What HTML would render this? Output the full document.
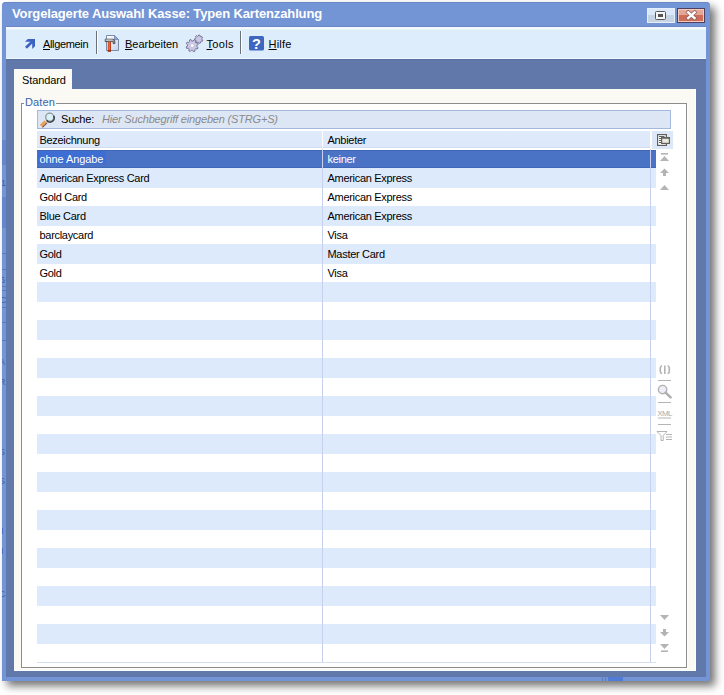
<!DOCTYPE html>
<html><head><meta charset="utf-8">
<style>
*{box-sizing:border-box}
html,body{margin:0;padding:0}
body{width:724px;height:695px;overflow:hidden;background:#fff;position:relative;font-family:"Liberation Sans",sans-serif;font-size:11px;color:#000}
.a{position:absolute}
.t{position:absolute;white-space:nowrap;line-height:16px;height:16px}
#win{left:2px;top:2px;width:708px;height:679px;background:#7395d5;border-radius:4px 4px 0 0;box-shadow:5px 5px 8px rgba(0,0,0,.55),inset 0 1px 0 #6a88c6}
#tline{left:6px;top:26px;width:700px;height:1px;background:#6b87c2}
#title{left:12px;top:6px;font-weight:bold;font-size:13px;color:#fff;letter-spacing:-0.13px}
#tb{left:6px;top:27px;width:700px;height:32px;background:linear-gradient(#f2faff 0,#f2faff 2px,#deedfc 3px,#deedfc 31px,#eef6fe 31px)}
#slate{left:6px;top:59px;width:700px;height:618px;background:linear-gradient(#566f9e 0,#6079aa 2px)}
#panel{left:14px;top:89px;width:682px;height:582px;background:#faf9f4;border-right:1px solid #fff;border-bottom:1px solid #fff}
#tab{left:14px;top:69px;width:58px;height:21px;background:#faf9f4}
.tbt{letter-spacing:-0.22px}
.sep{position:absolute;width:2px;border-left:1px solid #6c7079;border-right:1px solid #fff}
#gb{left:21px;top:103px;width:666px;height:565px;border:1px solid #8c8c8c}
#gbw{left:22px;top:104px;width:664px;height:563px;background:#fff}
#daten{left:25px;top:94px;color:#3765ad;font-size:11px;letter-spacing:0.1px}
#search{left:37px;top:110px;width:634px;height:19px;background:#dde6f5;border:1px solid #a3badd}
.row{position:absolute;left:37px;width:619px;height:18px}
.blue{height:20px}
.blue{background:#ddeafc}
.sel{background:#4a73c5;color:#fff;box-shadow:inset 0 1px 0 #4066b6,inset 0 -1px 0 #4066b6}
.c1,.c2{position:absolute;top:0;line-height:19px;height:19px;white-space:nowrap;letter-spacing:-0.3px;transform:scaleY(1.05);transform-origin:0 13px}
.c1{left:2.5px}
.c2{left:290.5px}
#hdr{left:37px;top:131px;width:613px;height:17px;background:linear-gradient(#dfeafb 0,#dde9fa 16px,#d2dcec 16px)}
#hsep{left:322px;top:131px;width:1px;height:17px;background:#fff}
#vline{left:322px;top:149px;width:1px;height:514px;background:#c7d1ef}
#vline2{left:650px;top:149px;width:1px;height:514px;background:#c7d1ef}
#hline{left:37px;top:662px;width:619px;height:1px;background:#d3dff2}
</style></head><body>
<div id="win" class="a"></div>
<div id="title" class="t">Vorgelagerte Auswahl Kasse: Typen Kartenzahlung</div>

<div class="a" style="left:647px;top:8px;width:28px;height:15px;background:linear-gradient(#dbe8f9 0,#dbe8f9 50%,#c6d3e2 50%,#c6d3e2 100%);border:1px solid #e6eefa"></div>
<div class="a" style="left:655px;top:11px;width:11px;height:9px;border:1.5px solid #555;border-radius:1.5px;background:#f4f6f8"></div>
<div class="a" style="left:658px;top:14px;width:5px;height:3px;background:#555"></div>
<div class="a" style="left:677px;top:8px;width:28px;height:15px;border:1px solid #4f4060;background:#d0705a"></div>
<div class="a" style="left:678px;top:9px;width:26px;height:13px;border:1px solid #f3cbbd;background:linear-gradient(#e5a898 0,#e3a594 45%,#cf6c57 45%,#cf6c57 100%)"></div>
<svg class="a" style="left:677px;top:8px" width="28" height="15" viewBox="677 8 28 15"><path d="M688.2 12.4 L694.6 18.1 M694.6 12.4 L688.2 18.1" stroke="#8c5a55" stroke-width="3.9" stroke-linecap="square"/><path d="M688.2 12.4 L694.6 18.1 M694.6 12.4 L688.2 18.1" stroke="#fff" stroke-width="2.5" stroke-linecap="square"/></svg>
<div id="tline" class="a"></div><div id="tb" class="a"></div><div class="a" style="left:608px;top:677px;width:15px;height:4px;background:#507bd6"></div><div class="a" style="left:602px;top:677px;width:1px;height:4px;background:#5d7cc0"></div><div class="a" style="left:605px;top:677px;width:1px;height:4px;background:#5d7cc0"></div>
<svg class="a" style="left:2px;top:60px" width="4" height="621" viewBox="2 60 4 621">
<rect x="2" y="140" width="4" height="25" fill="#6586cf"/>
<rect x="2" y="197" width="4" height="31" fill="#6586cf"/>
<g fill="#5a78bd">
<rect x="2" y="253" width="4" height="1"/><rect x="2" y="269" width="4" height="1"/><rect x="2" y="286" width="4" height="1"/><rect x="2" y="290" width="4" height="1"/><rect x="2" y="307" width="4" height="1"/><rect x="2" y="322" width="4" height="1"/><rect x="2" y="340" width="4" height="1"/>
</g>
<g fill="#3f5ea8" font-family="Liberation Sans" font-size="9">
<text x="1" y="186">1:</text>
<text x="0" y="283">6</text>
<text x="0" y="303">C</text>
<text x="-1" y="365">A</text>
<text x="-1" y="385">R</text>
<text x="-1" y="455">S</text>
<text x="-1" y="484">S</text>
<text x="1" y="534">I</text>
<text x="1" y="554">I</text>
<text x="-1" y="597">C</text>
</g>
</svg>

<div id="slate" class="a"></div>
<div id="tab" class="a"></div>
<div id="panel" class="a"></div>
<div class="t" style="left:22px;top:72px;letter-spacing:-0.1px">Standard</div>


<svg class="a" style="left:0;top:0" width="724" height="100" viewBox="0 0 724 100">
<path d="M25 41.8 L27.8 39 L35 39 L35 46.2 L32.2 49 L32.2 43.6 L27 48.8 L25 46.8 L30.3 41.8 Z" fill="#3d62c2"/>
<defs><linearGradient id="dg" x1="0" y1="0" x2="1" y2="1"><stop offset="0" stop-color="#ffffff"/><stop offset="1" stop-color="#c4d4ee"/></linearGradient>
<linearGradient id="hg" x1="0" y1="0" x2="1" y2="0"><stop offset="0" stop-color="#b83010"/><stop offset=".45" stop-color="#f07848"/><stop offset="1" stop-color="#a82808"/></linearGradient></defs>
<path d="M106.5 35.5 H114.5 L118.5 39.5 V50.5 H106.5 Z" fill="url(#dg)" stroke="#7d8ca6" stroke-width="1"/>
<path d="M114.5 35.5 V39.5 H118.5 Z" fill="#8fa8d8" stroke="#6f86b8" stroke-width="0.8"/>
<path d="M105.2 39.2 H113 Q114.8 39.2 114.8 41.2 V43.6 H113.2 V41.6 H105.2 Z" fill="#9c9c9c" stroke="#3c3c3c" stroke-width="0.8"/>
<rect x="105.6" y="39.6" width="7" height="0.9" fill="#e0e0e0"/>
<rect x="107.8" y="41.8" width="3.2" height="9.6" fill="url(#hg)"/>
<rect x="107.8" y="50.4" width="3.2" height="1.2" fill="#7a1a08"/>
<g fill="#cac8e4" stroke="#6e6c92" stroke-width="0.9"><path d="M201.88 39.52 L202.78 40.18 L202.28 41.39 L201.18 41.22 L200.44 41.89 L200.48 43.00 L199.22 43.37 L198.67 42.40 L197.68 42.23 L196.84 42.97 L195.77 42.21 L196.18 41.17 L195.69 40.29 L194.60 40.09 L194.52 38.78 L195.59 38.46 L195.97 37.53 L195.44 36.55 L196.42 35.67 L197.34 36.30 L198.30 36.02 L198.74 35.00 L200.04 35.22 L200.12 36.33 L200.93 36.91 L202.01 36.62 L202.65 37.76 L201.83 38.52 Z"/><path d="M196.81 46.53 L198.09 47.54 L197.34 49.06 L195.76 48.67 L194.80 49.52 L194.99 51.13 L193.39 51.69 L192.55 50.29 L191.27 50.21 L190.26 51.49 L188.74 50.74 L189.13 49.16 L188.28 48.20 L186.67 48.39 L186.11 46.79 L187.51 45.95 L187.59 44.67 L186.31 43.66 L187.06 42.14 L188.64 42.53 L189.60 41.68 L189.41 40.07 L191.01 39.51 L191.85 40.91 L193.13 40.99 L194.14 39.71 L195.66 40.46 L195.27 42.04 L196.12 43.00 L197.73 42.81 L198.29 44.41 L196.89 45.25 Z"/></g>
<circle cx="192.2" cy="45.6" r="1.3" fill="#fff"/>
<rect x="249" y="36" width="15" height="14.6" rx="1.5" fill="#3f67c1"/>
<text x="256.4" y="48.8" font-family="Liberation Sans" font-weight="bold" font-size="14.5" fill="#fff" text-anchor="middle">?</text>
</svg>
<div class="t tbt" style="left:43px;top:36px;letter-spacing:-0.35px"><u>A</u>llgemein</div>
<div class="sep" style="left:96px;top:31px;height:23px"></div>
<div class="t tbt" style="left:125px;top:36px;letter-spacing:0px"><u>B</u>earbeiten</div>
<div class="t tbt" style="left:206.5px;top:36px;letter-spacing:0.3px"><u>T</u>ools</div>
<div class="sep" style="left:240px;top:31px;height:23px"></div>
<div class="t tbt" style="left:268.5px;top:36px;letter-spacing:0.2px"><u>H</u>ilfe</div>

<div class="a" style="left:22px;top:104px;width:666px;height:565px;border:1px solid #fff"></div><div id="gb" class="a"></div>
<div id="gbw" class="a"></div>
<div class="a" style="left:24px;top:102px;width:32px;height:2px;background:#faf9f4"></div><div id="daten" class="t">Daten</div>
<div id="search" class="a"></div>
<div class="t" style="left:61px;top:111px;letter-spacing:-0.2px">Suche:</div>
<div class="t" style="left:102px;top:111px;font-style:italic;color:#8a8a8a;letter-spacing:-0.18px">Hier Suchbegriff eingeben (STRG+S)</div>

<div id="hdr" class="a"><div class="c1">Bezeichnung</div><div class="c2">Anbieter</div></div><div id="hsep" class="a"></div>

<div class="row sel" style="top:150px"><div class="a" style="left:1px;top:1px;width:68px;height:13px;background:#3e6dd3"></div><div class="c1" style="letter-spacing:-0.1px">ohne Angabe</div><div class="c2">keiner</div></div>
<div class="row blue" style="top:168px"></div>
<div class="row" style="top:169px"><div class="c1">American Express Card</div><div class="c2">American Express</div></div>
<div class="row" style="top:188px"><div class="c1">Gold Card</div><div class="c2">American Express</div></div>
<div class="row blue" style="top:206px"></div>
<div class="row" style="top:207px"><div class="c1">Blue Card</div><div class="c2">American Express</div></div>
<div class="row" style="top:226px"><div class="c1">barclaycard</div><div class="c2">Visa</div></div>
<div class="row blue" style="top:244px"></div>
<div class="row" style="top:245px"><div class="c1">Gold</div><div class="c2">Master Card</div></div>
<div class="row" style="top:264px"><div class="c1">Gold</div><div class="c2">Visa</div></div>
<div class="row blue" style="top:282px"></div>
<div class="row blue" style="top:320px"></div>
<div class="row blue" style="top:358px"></div>
<div class="row blue" style="top:396px"></div>
<div class="row blue" style="top:434px"></div>
<div class="row blue" style="top:472px"></div>
<div class="row blue" style="top:510px"></div>
<div class="row blue" style="top:548px"></div>
<div class="row blue" style="top:586px"></div>
<div class="row blue" style="top:624px"></div>
<div id="vline" class="a"></div>
<div id="vline2" class="a"></div>
<div id="hline" class="a"></div>

<svg class="a" style="left:0;top:100px" width="724" height="580" viewBox="0 100 724 580">
<g>
<path d="M39.8 124.8 L44.4 120.2 L46.6 122.4 L42 127 Z" fill="#eba35a"/>
<path d="M42 127 L46.6 122.4 L47.4 123.2 L42.8 127.8 Z" fill="#7a5040"/>
<circle cx="49.7" cy="117.2" r="4" fill="#d8f2f8" stroke="#8a9498" stroke-width="1.3"/>
<path d="M46.7 120.2 A4 4 0 0 0 53.6 115.8" fill="none" stroke="#3f4448" stroke-width="1.6"/>
</g>
<rect x="652" y="131" width="21" height="18" fill="#dce8f8"/>
<rect x="657.6" y="134.6" width="8.8" height="10.8" fill="#fff" stroke="#606060" stroke-width="1.2"/>
<g stroke="#606060" stroke-width="1"><path d="M659 136.5 H664.5 M659 138.5 H661.5 M659 140.5 H661.5 M659 142.5 H661.5"/></g>
<rect x="661.6" y="137.8" width="7.8" height="5.6" fill="#ebe8dc" stroke="#606060" stroke-width="1.2"/>
<rect x="661" y="137.2" width="9" height="1.4" fill="#606060"/>
<g fill="#b4b4b4">
<rect x="661" y="153" width="7" height="1.6"/>
<path d="M660 161 L664.5 156 L669 161 Z"/>
<path d="M660 173 L664.5 168.5 L669 173 H666 V176 H663 V173 Z"/>
<path d="M660 190 L664.5 185 L669 190 Z"/>
<path d="M660 615 L669 615 L664.5 620 Z"/>
<path d="M660 632 H663 V629 H666 V632 H669 L664.5 636.5 Z"/>
<path d="M660 644 L669 644 L664.5 649 Z"/>
<rect x="661" y="650.4" width="7" height="1.6"/>
</g>
<g fill="none" stroke="#b4b4b4" stroke-width="1">
<path d="M658 380.5 H671 M658 402.5 H671 M658 424.5 H671 M658 418 H671"/>
<path d="M662 365.8 Q660.3 366 660.3 368 V371.5 Q660.3 373.3 662 373.5 M667.6 365.8 Q669.3 366 669.3 368 V371.5 Q669.3 373.3 667.6 373.5 M664.8 365.5 V374" stroke-width="1.6"/>
</g>
<circle cx="662.6" cy="389.6" r="4.2" fill="#eeeef8" stroke="#b0b0b0" stroke-width="1.4"/>
<path d="M665.6 392.6 L670.6 397.4" stroke="#b0b0b0" stroke-width="2.6" stroke-linecap="round"/>
<text x="664.6" y="416.3" font-family="Liberation Sans" font-size="8" fill="#ababab" text-anchor="middle" letter-spacing="-0.6" transform="translate(664.6 416.3) scale(1 0.85) translate(-664.6 -416.3)">XML</text>
<path d="M657 431.5 H667 L663.2 435.5 V440.5 H661 V435.5 Z" fill="none" stroke="#b4b4b4" stroke-width="1"/>
<path d="M666 434.5 H672 M666 437 H672 M666 439.5 H672" stroke="#b4b4b4" stroke-width="1"/>
</svg>
</body></html>
